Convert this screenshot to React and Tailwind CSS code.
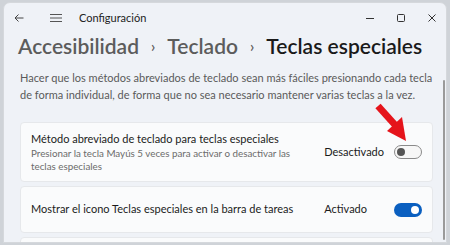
import React from "react";

function Toggle({ on }) {
  if (on) {
    return (
      <div className="w-[28px] h-[14px] rounded-full bg-[#0a5fc0] flex items-center justify-end pr-[3px] shrink-0">
        <div className="w-[8px] h-[8px] rounded-full bg-white" />
      </div>
    );
  }
  return (
    <div className="w-[28px] h-[14px] rounded-full border border-[#8a8a8a] bg-[#f7f7f7] flex items-center pl-[2px] shrink-0">
      <div className="w-[8px] h-[8px] rounded-full bg-[#555]" />
    </div>
  );
}

export default function App() {
  return (
    <div
      className="w-[450px] h-[245px] bg-[#cfd3d8] overflow-hidden relative"
      style={{ fontFamily: 'Lato, "Noto Sans", sans-serif' }}
    >
      <div className="ml-[3px] mt-[2px] w-[444px] h-[241px] rounded-tl-[7px] rounded-tr-[7px] bg-[#eff2f7] border border-[#d5d8dc] overflow-hidden flex flex-col">
        {/* Title bar */}
        <div className="h-[30px] flex items-center shrink-0">
          <svg width="10" height="10" viewBox="0 0 10 10" className="ml-[10px]">
            <path d="M9.5 5H1M4.5 1.5L1 5l3.5 3.5" fill="none" stroke="#444" strokeWidth="1" />
          </svg>
          <svg width="12" height="10" viewBox="0 0 12 10" className="ml-[26px]">
            <path d="M0 1.5h12M0 5h12M0 8.5h12" stroke="#555" strokeWidth="1" />
          </svg>
          <span className="ml-[17px] text-[11px] text-[#222] whitespace-nowrap">Configuración</span>
          <div className="ml-auto flex items-center">
            <svg width="8" height="10" viewBox="0 0 8 10" className="mr-[23px]">
              <path d="M0 5.5h8" stroke="#333" strokeWidth="1" />
            </svg>
            <svg width="8" height="8" viewBox="0 0 8 8" className="mr-[23px]">
              <rect x="0.5" y="0.5" width="7" height="7" rx="1" fill="none" stroke="#333" strokeWidth="1" />
            </svg>
            <svg width="8" height="8" viewBox="0 0 8 8" className="mr-[10px]">
              <path d="M0.5 0.5l7 7M7.5 0.5l-7 7" stroke="#333" strokeWidth="1" />
            </svg>
          </div>
        </div>

        {/* Heading */}
        <div className="pl-[14px] mt-[-2px] flex items-center whitespace-nowrap text-[21px] font-semibold leading-[30px]">
          <span className="text-[#5c5c5c]">Accesibilidad</span>
          <span className="text-[#5c5c5c] text-[15px] mx-[12px]">›</span>
          <span className="text-[#5c5c5c]">Teclado</span>
          <span className="text-[#5c5c5c] text-[15px] mx-[12px]">›</span>
          <span className="text-[#1a1a1a]">Teclas especiales</span>
        </div>

        {/* Description */}
        <div className="pl-[16px] mt-[8px] text-[11px] leading-[17px] text-[#5a5a5a] whitespace-nowrap">
          Hacer que los métodos abreviados de teclado sean más fáciles presionando cada tecla
          <br />
          de forma individual, de forma que no sea necesario mantener varias teclas a la vez.
        </div>

        {/* Cards */}
        <div className="mt-[19px] ml-[16px] w-[413px] flex flex-col gap-[4px]">
          <div className="h-[60px] shrink-0 rounded-[4px] bg-[#fafbfc] border border-[#e6e8eb] flex items-center pl-[10px] pr-[10px]">
            <div className="flex-1">
              <div className="text-[11px] leading-[14px] text-[#1b1b1b]">Método abreviado de teclado para teclas especiales</div>
              <div className="mt-[1px] text-[9.8px] leading-[13px] text-[#6b6b6b] whitespace-nowrap">
                Presionar la tecla Mayús 5 veces para activar o desactivar las
                <br />
                teclas especiales
              </div>
            </div>
            <span className="mr-[10px] text-[11px] text-[#1b1b1b]">Desactivado</span>
            <Toggle on={false} />
          </div>
          <div className="h-[47px] shrink-0 rounded-[4px] bg-[#fafbfc] border border-[#e6e8eb] flex items-center pl-[10px] pr-[10px]">
            <div className="flex-1 text-[11px] text-[#1b1b1b]">Mostrar el icono Teclas especiales en la barra de tareas</div>
            <span className="mr-[27px] text-[11px] text-[#1b1b1b]">Activado</span>
            <Toggle on={true} />
          </div>
          <div className="h-[40px] shrink-0 rounded-[4px] bg-[#fafbfc] border border-[#e6e8eb]" />
        </div>
      </div>

      {/* scrollbar */}
      <div className="absolute left-[443px] top-[80px] w-[2px] h-[160px] rounded-full bg-[#9a9a9a]" />

      {/* red arrow */}
      <svg className="absolute left-[372px] top-[102px]" width="40" height="42" viewBox="0 0 40 42">
        <path d="M6 4 L24 24" stroke="#e5141b" strokeWidth="7" strokeLinecap="butt" />
        <path d="M15 29 L34 39 L30 15 Z" fill="#e5141b" />
      </svg>
    </div>
  );
}
